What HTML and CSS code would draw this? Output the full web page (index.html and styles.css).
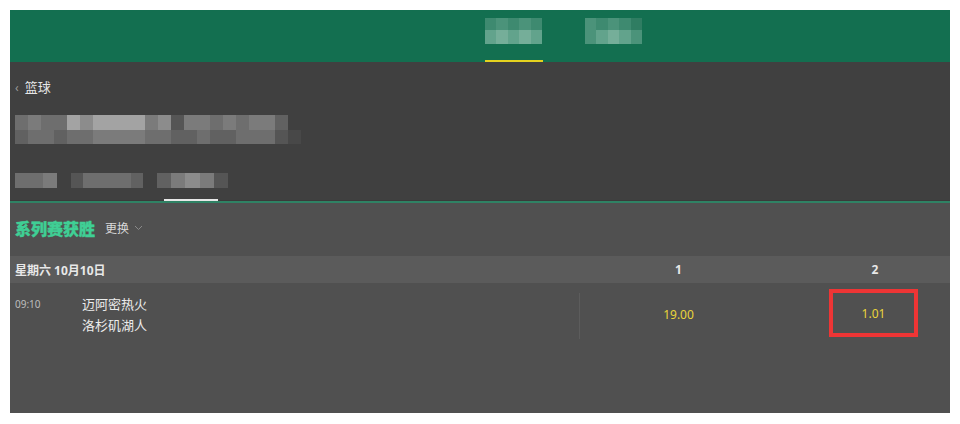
FILE: index.html
```html
<!doctype html>
<html lang="zh-CN">
<head>
  <meta charset="utf-8" />
  <meta name="viewport" content="width=device-width,initial-scale=1" />
  <title>篮球 - 系列赛获胜</title>
  <link rel="stylesheet" href="styles.css">
</head>
<body>
  <div class="app">
    <!-- Top nav -->
    <div class="topbar">
      <div class="top-tab active">
        <div class="mosaic-row"><i class="g1"></i><i class="g2"></i><i class="g1"></i><i class="g2"></i><i class="g1"></i></div>
        <div class="mosaic-row"><i class="g3"></i><i class="g4"></i><i class="g3"></i><i class="g4"></i><i class="g3"></i></div>
      </div>
      <div class="top-tab">
        <div class="mosaic-row"><i class="g2"></i><i class="g1"></i><i class="g2"></i><i class="g1"></i><i class="g0"></i></div>
        <div class="mosaic-row"><i class="g2"></i><i class="g3"></i><i class="g4"></i><i class="g3"></i><i class="g2"></i></div>
      </div>
    </div>

    <!-- Event header -->
    <div class="event-head">
      <div class="crumb"><span class="chev">‹</span>篮球</div>
      <div class="title-mosaic">
        <div class="mosaic-row">
          <i class="s3"></i><i class="s4"></i><i class="s3"></i><i class="s3"></i><i class="s6"></i><i class="s5"></i><i class="s6"></i><i class="s6"></i><i class="s6"></i><i class="s6"></i><i class="s4"></i><i class="s5"></i><i class="s1"></i><i class="s4"></i><i class="s4"></i><i class="s3"></i><i class="s4"></i><i class="s3"></i><i class="s4"></i><i class="s4"></i><i class="s2"></i>
        </div>
        <div class="mosaic-row">
          <i class="s2"></i><i class="s3"></i><i class="s3"></i><i class="s2"></i><i class="s3"></i><i class="s3"></i><i class="s4"></i><i class="s4"></i><i class="s4"></i><i class="s4"></i><i class="s3"></i><i class="s3"></i><i class="s2"></i><i class="s2"></i><i class="s3"></i><i class="s2"></i><i class="s2"></i><i class="s3"></i><i class="s3"></i><i class="s3"></i><i class="s1"></i><i class="s0"></i>
        </div>
      </div>
      <div class="sub-tabs">
        <div class="sub-tab"><i class="s3"></i><i class="s3"></i><i class="s4"></i></div>
        <div class="sub-tab"><i class="s1"></i><i class="s3"></i><i class="s3"></i><i class="s3"></i><i class="s3"></i><i class="s2"></i></div>
        <div class="sub-tab"><i class="s2"></i><i class="s4"></i><i class="s5"></i><i class="s4"></i><i class="s1"></i></div>
      </div>
    </div>
    <div class="tab-line"><span class="tab-indicator"></span></div>

    <!-- Market -->
    <div class="market">
      <div class="market-title">
        <span class="market-name">系列赛获胜</span>
        <span class="switch">更换 <svg width="9" height="6" viewBox="0 0 9 6"><path d="M1 1l3.5 3.5L8 1" fill="none" stroke="#8a8a8a" stroke-width="1"/></svg></span>
      </div>
      <div class="date-row">
        <div class="date">星期六 10月10日</div>
        <div class="col-head">1</div>
        <div class="col-head last">2</div>
      </div>
      <div class="match-row">
        <div class="match">
          <div class="time">09:10</div>
          <div class="teams">
            <div>迈阿密热火</div>
            <div>洛杉矶湖人</div>
          </div>
        </div>
        <div class="odds">19.00</div>
        <div class="odds last"><span class="odds-box">1.01</span></div>
      </div>
    </div>
  </div>
</body>
</html>
```

FILE: styles.css
```css
:root {
  --green: #136f50;
  --dark: #404040;
  --panel: #505050;
  --band: #5b5b5b;
  --odds: #e9d43a;
  font-family: "Noto Sans", "Noto Sans CJK SC", sans-serif;
}
html, body { margin:0; padding:0; background:#fff; }
body { padding:10px; }
.app { width:940px; height:403px; background:var(--panel); }

/* mosaic (blurred text) */
.mosaic-row { display:flex; }
.mosaic-row i, .sub-tab i { display:block; flex:none; }

/* Top bar */
.topbar {
  height:52px; background:var(--green);
  display:flex; gap:42px; padding-left:475px; box-sizing:border-box;
}
.top-tab {
  width:58px; height:52px; box-sizing:border-box;
  padding-top:8px; position:relative;
}
.top-tab .mosaic-row { height:12px; }
.top-tab .mosaic-row + .mosaic-row { height:14px; }
.top-tab i { width:11.4px; height:100%; }
.top-tab.active::after {
  content:""; position:absolute; left:0; right:0; bottom:0;
  height:2px; background:#e4d21f;
}
.g0 { background:#2f7d62; }
.g1 { background:#3e8a70; }
.g2 { background:#4b937a; }
.g3 { background:#62a38c; }
.g4 { background:#75ae99; }

/* Event head */
.event-head {
  height:138px; background:var(--dark);
  padding:0 5px; box-sizing:border-box;
}
.crumb {
  padding-top:17px; font-size:13px; line-height:16px; color:#e6e6e6;
}
.chev { color:#9a9a9a; font-size:12px; margin-right:6px; }
.title-mosaic { margin-top:19px; }
.title-mosaic .mosaic-row { height:15px; }
.title-mosaic .mosaic-row + .mosaic-row { height:14px; }
.title-mosaic i { width:13px; height:100%; }
.sub-tabs { display:flex; gap:14px; margin-top:29px; }
.sub-tab { display:flex; height:15px; }
.sub-tab i { width:14px; height:15px; }
.sub-tab:nth-child(1) i { width:14px; }
.sub-tab:nth-child(2) i { width:12px; }
.sub-tab:nth-child(3) i { width:14.2px; }
.s0 { background:#484848; }
.s1 { background:#555; }
.s2 { background:#616161; }
.s3 { background:#6e6e6e; }
.s4 { background:#7b7b7b; }
.s5 { background:#8c8c8c; }
.s6 { background:#a3a3a3; }

.tab-line {
  height:3px; background:#2f8264; position:relative;
  border-top:1px solid #3a3a3a; box-sizing:border-box;
}
.tab-indicator {
  position:absolute; left:154px; top:-2px;
  width:54px; height:2px; background:#e8e8e8;
}

/* Market */
.market-title {
  height:53px; display:flex; align-items:center; padding:0 5px; padding-bottom:4px; box-sizing:border-box;
}
.market-name {
  font-family:"Noto Sans CJK SC", sans-serif;
  font-size:16px; font-weight:900; color:#3fcf95;
  -webkit-text-stroke:0.4px #3fcf95;
}
.switch { margin-left:10px; font-size:12px; color:#d8d8d8; display:flex; align-items:center; gap:5px; }

.date-row, .match-row {
  display:grid; grid-template-columns:570px 197px 1fr;
}
.date-row {
  height:27px; background:var(--band); align-items:center;
  font-size:12px; font-weight:bold; color:#e8e8e8;
}
.date { padding-left:5px; }
.col-head { text-align:center; }
.last { padding-left:23px; box-sizing:border-box; }

.match-row { height:64px; }
.match { display:flex; padding:1px 0 0 5px; border-right:1px solid #5c5c5c; margin:10px 0 8px; }
.time { width:67px; font-size:10px; color:#bdbdbd; padding-top:3px; }
.teams { font-size:13px; line-height:21px; color:#ececec; }
.odds {
  display:flex; align-items:center; justify-content:center;
  font-size:12px; color:var(--odds); padding-bottom:2px;
}
.odds-box {
  width:89px; height:48px; box-sizing:border-box;
  border:4px solid #ee3535; display:flex; align-items:center; justify-content:center;
  margin-right:3px; margin-bottom:2px;
}
```
